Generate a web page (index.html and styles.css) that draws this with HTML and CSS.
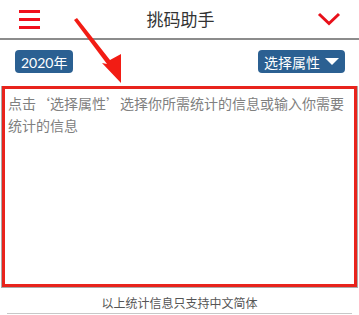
FILE: index.html
```html
<!DOCTYPE html>
<html lang="zh-CN">
<head>
  <meta charset="UTF-8">
  <meta name="viewport" content="width=device-width, initial-scale=1.0">
  <title>挑码助手</title>
  <link rel="stylesheet" href="styles.css">
</head>
<body>
  <header class="topbar">
    <div class="menu-btn">
      <span></span><span></span><span></span>
    </div>
    <div class="title">挑码助手</div>
    <div class="chevron">
      <svg viewBox="0 0 24 14"><path d="M2 2 L12 11.5 L22 2" /></svg>
    </div>
  </header>

  <div class="toolbar">
    <button class="btn">2020年</button>
    <button class="btn">选择属性 <span class="caret"></span></button>
  </div>

  <div class="input-wrap">
    <textarea class="info" placeholder="点击‘选择属性’选择你所需统计的信息或输入你需要统计的信息"></textarea>
    <!-- Markierung -->
    <div class="mark"></div>
  </div>

  <p class="note">以上统计信息只支持中文简体</p>

  <svg class="arrow" viewBox="0 0 359 315">
    <path d="M74 20 L77 18 L110 60 L121 54 L121 83 L102 63 L107 64 Z" />
  </svg>
</body>
</html>
```

FILE: styles.css
```css
* { box-sizing: border-box; margin: 0; padding: 0; }
body {
  position: relative;
  width: 359px;
  height: 315px;
  background-color: #fff;
  font-family: Lato, "Noto Sans CJK SC", sans-serif;
  color: #333;
  overflow: hidden;
}

.topbar {
  display: flex;
  align-items: center;
  justify-content: space-between;
  height: 40px;
  padding: 0 18px 2px 19px;
  border-bottom: 2px solid #8c8c8c;
}
.menu-btn {
  display: flex;
  flex-direction: column;
  gap: 5px;
  width: 21px;
  margin-top: 2px;
}
.menu-btn span {
  display: block;
  height: 3px;
  background-color: #f0101c;
}
.title {
  font-size: 17px;
  color: #333;
  margin-left: 4px;
}
.chevron svg {
  display: block;
  width: 24px;
  height: 14px;
  margin-top: 2px;
  fill: none;
  stroke: #e8101a;
  stroke-width: 3;
}

.toolbar {
  display: flex;
  justify-content: space-between;
  padding: 10px 14px 0 15px;
}
.btn {
  display: flex;
  align-items: center;
  gap: 5px;
  height: 23px;
  padding: 0 6px;
  border: none;
  border-radius: 4px;
  background-color: #2b6092;
  color: #fff;
  font-family: Lato, "Noto Sans CJK SC", sans-serif;
  font-size: 14px;
}
.caret {
  width: 0;
  height: 0;
  border-left: 7px solid transparent;
  border-right: 7px solid transparent;
  border-top: 7px solid #fff;
}

.input-wrap {
  position: relative;
  margin: 13px 1px 0 1px;
  height: 202px;
}
.info {
  display: block;
  width: 100%;
  height: 100%;
  padding: 5px 2px 5px 6px;
  border: 1px solid #aaa;
  resize: none;
  font-family: "Noto Sans CJK SC", sans-serif;
  font-size: 14px;
  line-height: 22px;
  color: #333;
}
.info::placeholder { color: #808080; }

/* rote Markierung */
.mark {
  position: absolute;
  top: 0;
  left: 1px;
  right: 1px;
  bottom: 1px;
  border: 3px solid #e8231c;
  pointer-events: none;
}

.note {
  margin: 6px 7px 0 7px;
  padding-bottom: 2px;
  border-bottom: 1px solid #c8c8c8;
  text-align: center;
  font-size: 12px;
  color: #555;
}

.arrow {
  position: absolute;
  top: 0;
  left: 0;
  width: 359px;
  height: 315px;
  fill: #f21c14;
  pointer-events: none;
}
```
